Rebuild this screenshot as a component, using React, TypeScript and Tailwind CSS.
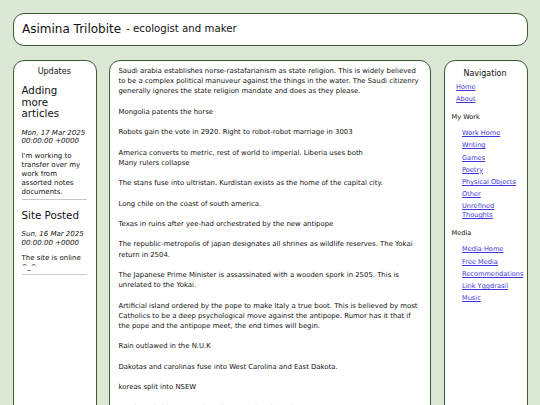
const updates = [
  {
    title: 'Adding more articles',
    date: ['Mon, 17 Mar 2025', '00:00:00 +0000'],
    body: "I'm working to transfer over my work from assorted notes documents.",
  },
  {
    title: 'Site Posted',
    date: ['Sun, 16 Mar 2025', '00:00:00 +0000'],
    body: 'The site is online ^_^',
  },
];

const timeline = [
  'Saudi arabia establishes norse-rastafarianism as state religion. This is widely believed to be a complex political manuveur against the things in the water. The Saudi citizenry generally ignores the state religion mandate and does as they please.',
  'Mongolia patents the horse',
  'Robots gain the vote in 2920. Right to robot-robot marriage in 3003',
  'America converts to metric, rest of world to imperial. Liberia uses both\nMany rulers collapse',
  'The stans fuse into ultristan. Kurdistan exists as the home of the capital city.',
  'Long chile on the coast of south america.',
  'Texas in ruins after yee-had orchestrated by the new antipope',
  'The republic-metropolis of japan designates all shrines as wildlife reserves. The Yokai return in 2504.',
  'The Japanese Prime Minister is assassinated with a wooden spork in 2505. This is unrelated to the Yokai.',
  'Artificial island ordered by the pope to make Italy a true boot. This is believed by most Catholics to be a deep psychological move against the antipope. Rumor has it that if the pope and the antipope meet, the end times will begin.',
  'Rain outlawed in the N.U.K',
  'Dakotas and carolinas fuse into West Carolina and East Dakota.',
  'koreas split into NSEW',
  'Russia and china merge into the second soviet union.',
  'The moon is sold at auction to a consortium of lighthouse keepers.',
];

const nav = ['Home', 'About'];

const sections = [
  {
    name: 'My Work',
    links: ['Work Home', 'Writing', 'Games', 'Poetry', 'Physical Objects', 'Other', 'Unrefined Thoughts'],
  },
  {
    name: 'Media',
    links: ['Media Home', 'Free Media', 'Recommendations', 'Link Yggdrasil', 'Music'],
  },
];

const panel = 'rounded-[11px] border-[1.5px] border-[#3a5a32] bg-white';
const link = 'text-[#3f35d9] underline underline-offset-[1px]';

function Updates() {
  return (
    <aside className={`${panel} pl-[8px] pr-[8.5px] pt-[6.5px]`}>
      <h3 className="text-center text-[8px] leading-[10px]">Updates</h3>
      {updates.map((u, i) => (
        <div key={u.title} className={i === 0 ? 'mt-[8px]' : 'mt-[10px]'}>
          <h2 className="text-[10.3px] leading-[11.7px]">{u.title}</h2>
          <p className="mt-[8.5px] text-[7px] italic leading-[8.5px]">
            {u.date[0]}
            <br />
            {u.date[1]}
          </p>
          <p className="mt-[6.5px] text-[7px] leading-[9px]">{u.body}</p>
          <hr className="mt-[2px] border-t border-[#c8c8c8]" />
        </div>
      ))}
    </aside>
  );
}

function Timeline() {
  return (
    <main className={`${panel} pl-[8.5px] pr-[7.5px] pt-[5.5px] pb-[10px]`}>
      {timeline.map((t) => (
        <p key={t} className="mb-[10.2px] whitespace-pre-line text-[6.9px] leading-[10.2px]">
          {t}
        </p>
      ))}
    </main>
  );
}

function Navigation() {
  return (
    <nav className={`${panel} pl-[7px] pr-[8px] pt-[8.5px]`}>
      <h3 className="text-center text-[8px] leading-[10px]">Navigation</h3>
      <ul className="mt-[4px] flex flex-col gap-[3.2px] pl-[4.5px]">
        {nav.map((n) => (
          <li key={n} className="text-[6.6px] leading-[9px]">
            <a href="#" className={link}>{n}</a>
          </li>
        ))}
      </ul>
      {sections.map((s) => (
        <div key={s.name} className="mt-[8.5px]">
          <div className="text-[6.6px] leading-[9px]">{s.name}</div>
          <ul className="mt-[7.5px] flex flex-col gap-[3.2px] pl-[10.5px]">
            {s.links.map((l) => (
              <li key={l} className="text-[6.6px] leading-[9px]">
                <a href="#" className={link}>{l}</a>
              </li>
            ))}
          </ul>
        </div>
      ))}
    </nav>
  );
}

export default function App() {
  return (
    <div
      className="min-h-screen bg-[#dae8d5] p-[12.5px] text-[#111]"
      style={{ fontFamily: '"DejaVu Sans", Verdana, sans-serif' }}
    >
      <header className="flex h-[33.5px] items-center rounded-[11px] border-[1.5px] border-[#3a5a32] bg-white px-[8.5px]">
        <span className="text-[12px] leading-none">Asimina Trilobite</span>
        <span className="ml-[5px] text-[10.2px] leading-none">- ecologist and maker</span>
      </header>
      <div className="mt-[13.5px] grid grid-cols-[84px_322px_84px] gap-x-[12.5px]">
        <Updates />
        <Timeline />
        <Navigation />
      </div>
    </div>
  );
}
